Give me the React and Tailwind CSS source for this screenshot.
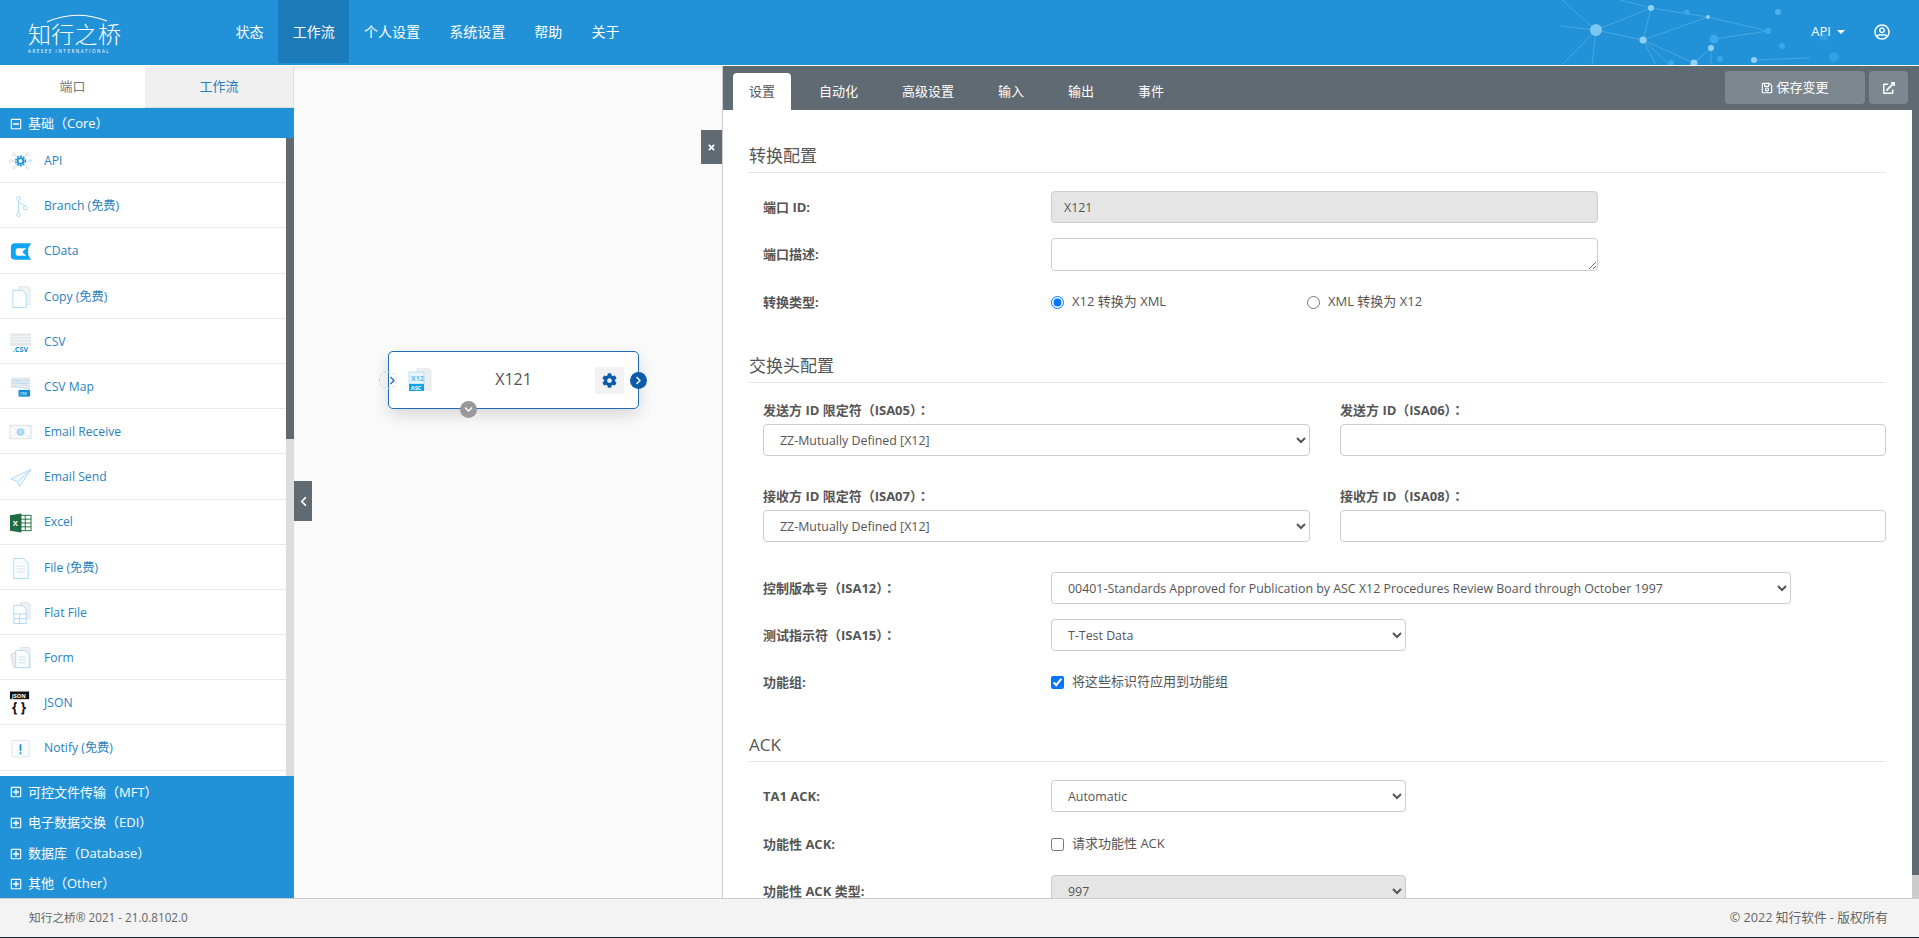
import {
  FaChevronDown,
  FaChevronLeft,
  FaChevronRight,
  FaCog,
  FaExternalLinkAlt,
  FaRegMinusSquare,
  FaRegPlusSquare,
  FaRegSave,
  FaRegUserCircle,
  FaTimes
} from 'react-icons/fa';

const NAV = ['状态', '工作流', '个人设置', '系统设置', '帮助', '关于'];
const TABS = ['设置', '自动化', '高级设置', '输入', '输出', '事件'];

const SKY = '#a9daf5';
const GREY = '#d5dbe2';

// header background network, coordinates are local to the svg (left edge at x=1560)
const NODES = [
  [36, 30, 6, '#7cc6f0'], [91, 8, 3, '#8fd0f4'], [148, 17, 2, '#8fd0f4'], [83, 40, 3.5, '#8fd0f4'],
  [154, 39, 4.5, '#3aa8ea'], [208, 31, 3, '#3aa8ea'], [151, 48, 3, '#8fd0f4'], [134, 63, 3.5, '#8fd0f4'],
  [194, 60, 3, '#8fd0f4'], [160, 59, 3, '#3aa8ea'], [111, 63, 3, '#3aa8ea'], [218, 12, 3, '#50b0ea'],
  [222, 46, 3, '#3aa8ea'], [274, 57, 5, '#319fe2'], [264, 37, 4, '#319fe2'], [127, 12, 2.5, '#3aa8ea']
];
const LINKS = [
  [36, 30, 91, 8], [36, 30, 83, 40], [91, 8, 148, 17], [91, 8, 83, 40], [83, 40, 148, 17], [83, 40, 134, 63],
  [148, 17, 208, 31], [154, 39, 208, 31], [134, 63, 151, 48], [151, 48, 151, 65], [194, 60, 250, 58],
  [36, 30, 0, 26], [36, 30, 2, 65], [36, 30, 32, 65], [36, 30, 2, 0], [91, 8, 60, 0], [83, 40, 96, 65], [83, 40, 110, 65]
];

function Network() {
  return (
    <svg className="absolute left-[1560px] top-0 h-[65px] w-[300px]" viewBox="0 0 300 65">
      {LINKS.map(([a, b, c, d], i) => (
        <line key={i} x1={a} y1={b} x2={c} y2={d} stroke="#7cc6f0" strokeWidth="0.7" opacity="0.6" />
      ))}
      {NODES.map(([x, y, r, fill], i) => <circle key={i} cx={x} cy={y} r={r} fill={fill} />)}
    </svg>
  );
}

const ICONS = {
  api: (
    <>
      <g fill="none" stroke={GREY} strokeWidth="0.8">
        <path d="M12 12 5 5M12 12l7-7M12 12l-7 7M12 12l7 7M12 12H3M12 12h18" stroke={SKY} />
        <circle cx="5" cy="5" r="1.5" /><circle cx="19" cy="5" r="1.5" /><circle cx="5" cy="19" r="1.5" />
        <circle cx="19" cy="19" r="1.5" /><circle cx="2" cy="12" r="1.5" /><circle cx="22" cy="12" r="1.5" />
      </g>
      <circle cx="12" cy="12" r="5" fill="none" stroke="#0f8ed8" strokeWidth="1.4" strokeDasharray="2 1.2" />
      <circle cx="12" cy="12" r="3" fill="#fff" stroke="#0f8ed8" strokeWidth="1.8" />
    </>
  ),
  branch: (
    <g fill="none" stroke={SKY} strokeWidth="1">
      <circle cx="10" cy="4" r="2" /><circle cx="10" cy="21" r="2" /><circle cx="17" cy="14" r="2" />
      <path d="M10 6v13M10 8l7 4" />
    </g>
  ),
  cdata: <path fill="#0ea5f5" fillRule="evenodd" d="M6 4h17l-3 5v7l3 5H6a4 4 0 0 1-4-4V8a4 4 0 0 1 4-4Zm3 5a2 2 0 0 0-2 2v4a2 2 0 0 0 2 2h9l-2-2-2-2 2-2 2-2Z" />,
  copy: (
    <g fill="none" strokeWidth="1">
      <path d="M10 1h10l2 2v17H10Z" fill="#f0f2f5" stroke="#e2e6ea" />
      <path d="M4 5h10l4 4v14H4Z" fill="#fff" stroke={SKY} />
    </g>
  ),
  csv: (
    <>
      <rect x="1" y="3" width="22" height="13" fill="#e4e6ea" />
      <path d="M1 6h22M1 9h22M1 12h22" stroke="#fff" strokeWidth="0.8" />
      <text x="4" y="22" fontSize="7.5" fontWeight="700" fill="#0f8ed8">.CSV</text>
    </>
  ),
  csvMap: (
    <>
      <rect x="2" y="2" width="20" height="11" fill="#e8eaee" />
      <path d="M2 5h20M2 8h20M2 11l20 3M4 4l16 7" stroke={SKY} strokeWidth="0.7" fill="none" />
      <rect x="10" y="15" width="12" height="7" fill="#0f8ed8" />
      <text x="11.5" y="20.6" fontSize="5" fill="#fff">csv</text>
    </>
  ),
  emailReceive: (
    <g fill="none">
      <rect x="1" y="5" width="22" height="14" fill="#fafbfc" stroke="#d8dde4" />
      <path d="m1 5 11 8 11-8M1 19l8-7M23 19l-8-7" stroke="#e0e4ea" strokeWidth="0.8" />
      <circle cx="12" cy="12" r="3.5" fill="#b6dff5" stroke="#7fc2ea" strokeWidth="0.8" />
    </g>
  ),
  emailSend: (
    <g fill="none" stroke={SKY} strokeWidth="1" strokeLinejoin="round">
      <path d="M23 4 2 14l7 3 2 5 12-18Z" fill="#f3fafe" />
      <path d="M23 4 9 17" />
    </g>
  ),
  excel: (
    <>
      <rect x="11" y="4" width="12" height="16" fill="#fff" stroke="#1f7145" />
      <path d="M11 8h12M11 12h12M11 16h12M17 4v16" stroke="#1f7145" strokeWidth="1" />
      <path d="M1 4 13 2v20L1 20Z" fill="#1f6b43" />
      <text x="3.8" y="15.5" fontSize="8" fontWeight="700" fill="#fff">X</text>
    </>
  ),
  file: (
    <g fill="none" stroke={SKY} strokeWidth="1">
      <path d="M5 2h10l5 5v16H5Z" fill="#f8fcff" />
      <path d="M8 10h9M8 13h9M8 16h9" stroke="#dfe3e8" />
    </g>
  ),
  flat: (
    <g fill="none" strokeWidth="1">
      <path d="M12 1h8l2 2v15H12Z" fill="#eef0f3" stroke="#e0e4e8" />
      <path d="M5 4h9l4 4v15H5Z" fill="#fff" stroke={SKY} />
      <path d="M5 13h13M5 18h13M11 13v10" stroke={SKY} />
    </g>
  ),
  form: (
    <g fill="none" strokeWidth="1">
      <path d="M12 1h9l1 1v20H12Z" fill="#eef0f3" stroke="#dfe3e8" />
      <path d="M2 8 8 6v15l-3 1Z" fill="#eef0f3" stroke="#cfd5db" />
      <path d="M7 4h10l4 4v14H7Z" fill="#fdfeff" stroke={SKY} />
      <path d="M10 11h8M10 14h8M10 17h8" stroke="#d5dae0" />
    </g>
  ),
  json: (
    <>
      <rect x="1" y="0" width="20" height="8" fill="#111" />
      <text x="3" y="6.5" fontSize="5.8" fontWeight="700" fill="#fff">JSON</text>
      <text x="3" y="21" fontSize="14" fontWeight="700" fill="#111">{'{ }'}</text>
    </>
  ),
  notify: (
    <>
      <path d="M4 3h16a1 1 0 0 1 1 1v15a1 1 0 0 1-1 1h-6l-2 2-2-2H4a1 1 0 0 1-1-1V4a1 1 0 0 1 1-1Z" fill="#fafcfe" stroke="#dde3ea" />
      <path d="M12 7v7M12 15.5v2" stroke="#1b8fdc" strokeWidth="1.8" />
    </>
  )
};

const PORTS = [
  ['api', 'API'], ['branch', 'Branch (免费)'], ['cdata', 'CData'], ['copy', 'Copy (免费)'], ['csv', 'CSV'],
  ['csvMap', 'CSV Map'], ['emailReceive', 'Email Receive'], ['emailSend', 'Email Send'], ['excel', 'Excel'],
  ['file', 'File (免费)'], ['flat', 'Flat File'], ['form', 'Form'], ['json', 'JSON'], ['notify', 'Notify (免费)']
];

function Category({ label }) {
  return (
    <div className="flex h-[30.6px] items-center gap-[6px] bg-[#2292d8] pl-[10px] pt-[3px] text-[13px] text-white">
      <FaRegPlusSquare size={12} />
      <span>{label}</span>
    </div>
  );
}

function SectionTitle({ children, className }) {
  return (
    <h4 className={`h-[29px] border-b border-[#e5e5e5] text-[17px] leading-[24px] text-[#555] ${className}`}>
      {children}
    </h4>
  );
}

// the centred colon of the reference only exists in the TC cut of the font
function Label({ children }) {
  const wide = children.endsWith('：');
  return (
    <span className="text-[13px] font-bold text-[#555]">
      {wide ? children.slice(0, -1) : children}
      {wide && <span className="font-['Noto_Sans_CJK_TC',sans-serif]">：</span>}
    </span>
  );
}

function Row({ label, children, className = 'mt-[15px]' }) {
  return (
    <div className={`flex h-[32px] items-center pl-[14px] ${className}`}>
      <div className="w-[288px] shrink-0 pb-[2px]"><Label>{label}</Label></div>
      {children}
    </div>
  );
}

function Select({ value, className, disabled }) {
  return (
    <select
      disabled={disabled}
      defaultValue={value}
      className={`h-[32px] rounded-[4px] border border-[#ccc] px-3 text-[12.4px] text-[#555] opacity-100 ${disabled ? 'bg-[#e5e5e5]' : 'bg-white'} ${className}`}
    >
      <option>{value}</option>
    </select>
  );
}

function Field({ label, children, className }) {
  return (
    <div className={className}>
      <div className="flex h-[20px] items-center"><Label>{label}</Label></div>
      <div className="mt-[4px]">{children}</div>
    </div>
  );
}

export default function App() {
  return (
    <div className="flex h-screen w-full flex-col overflow-hidden bg-white font-['Open_Sans','Noto_Sans_CJK_SC',sans-serif]">
      {/* Top bar */}
      <header className="relative flex h-[65px] shrink-0 bg-[#2292d8] text-white">
        <Network />
        <div className="relative flex h-[65px] w-[221px] shrink-0 flex-col items-start pl-[28px]">
          <svg className="absolute left-[46px] top-[13px] h-[10px] w-[62px]" viewBox="0 0 62 10">
            <path d="M1 9Q30-4 61 8" fill="none" stroke="#fff" strokeWidth="1.2" />
          </svg>
          <span className="mt-[21px] text-[23px] font-light leading-[26px] tracking-[0.3px]">知行之桥</span>
          <span className="mt-[1px] text-[4.5px] leading-[6px] tracking-[1.55px]">ARESEE INTERNATIONAL</span>
        </div>
        <nav className="relative flex h-[63px] text-[14px]">
          {NAV.map(n => (
            <div key={n} className={`flex items-center px-[14.6px] ${n === '工作流' ? 'bg-[#1c7cb9]' : ''}`}>{n}</div>
          ))}
        </nav>
        <div className="relative ml-auto flex h-[63px] items-center pr-[29px] text-[13px]">
          <span>API</span>
          <span className="ml-[6px] h-0 w-0 border-x-[4px] border-t-[4px] border-x-transparent border-t-white" />
          <FaRegUserCircle size={16} className="ml-[29px]" />
        </div>
      </header>

      <main className="flex min-h-0 flex-1 pt-px">
        {/* Port palette */}
        <aside className="flex w-[294px] shrink-0 flex-col">
          <div className="flex h-[42px] shrink-0 text-[13px]">
            <div className="flex w-[145px] items-center justify-center rounded-t-[4px] bg-white text-[#777]">端口</div>
            <div className="flex flex-1 items-center justify-center border-b border-r border-[#ddd] bg-[#f0f0f0] text-[#2b7bb9]">工作流</div>
          </div>
          <div className="flex h-[30px] shrink-0 items-center gap-[6px] bg-[#2292d8] pl-[10px] pt-[2px] text-[13px] text-white">
            <FaRegMinusSquare size={12} />
            <span>基础（Core）</span>
          </div>
          <div className="flex min-h-0 flex-1">
            <div className="min-w-0 flex-1 overflow-hidden">
              {PORTS.map(([icon, label]) => (
                <div key={label} className="flex h-[45.2px] items-center gap-[12px] border-b border-[#e9e9e9] pl-[9px] pt-[2px] text-[12.2px] text-[#2b82c0]">
                  <svg className="h-[24px] w-[23px] shrink-0" viewBox="0 0 24 24">{ICONS[icon]}</svg>
                  <span>{label}</span>
                </div>
              ))}
            </div>
            <div className="w-2 shrink-0 bg-[#ddd]">
              <div className="h-[301px] bg-[#5f6a72]" />
            </div>
          </div>
          <Category label="可控文件传输（MFT）" />
          <Category label="电子数据交换（EDI）" />
          <Category label="数据库（Database）" />
          <Category label="其他（Other）" />
        </aside>

        {/* Canvas */}
        <section className="relative w-[428px] shrink-0 bg-[#fafafa] shadow-[inset_0_5px_4px_-3px_rgba(0,0,0,0.08)]">
          <div className="absolute left-0 top-[415px] flex h-[40px] w-[18px] items-center justify-center bg-[#5f6a72] text-white">
            <FaChevronLeft size={11} />
          </div>
          <div className="absolute right-0 top-[64px] flex h-[34px] w-[21px] items-center justify-center bg-[#5f6a72] text-white">
            <FaTimes size={9} />
          </div>
          <div className="absolute left-[94px] top-[285px] flex h-[58px] w-[251px] items-center rounded-[5px] border border-[#1c6fb7] bg-white shadow-[0_6px_16px_rgba(0,0,0,0.14)]">
            <svg className="ml-[19px] h-[24px] w-[24px] shrink-0" viewBox="0 0 24 24">
              <path d="M9 0h11l3 3v19H9Z" fill="#eceef1" stroke="#dfe2e6" strokeWidth="0.7" />
              <rect x="1" y="4" width="15" height="12" fill="#e9f6fe" stroke="#9ad3f4" strokeWidth="0.7" />
              <text x="3" y="13" fontSize="7" fontWeight="700" fill="#5fb8ee">X12</text>
              <rect x="1" y="16" width="15" height="7" fill="#17a0ea" />
              <text x="2.8" y="22" fontSize="5.6" fontWeight="700" fill="#fff">ASC</text>
            </svg>
            <span className="flex-1 pb-[2px] text-center text-[16px] text-[#555]">X121</span>
            <div className="mr-[14px] flex h-[27px] w-[29px] items-center justify-center rounded-[3px] bg-[#f2f2f2] text-[#0d5ca8]">
              <FaCog size={15} />
            </div>
            <div className="absolute -left-[10px] top-[19px] h-[18px] w-[18px] rounded-full border border-dashed border-[#ccc] bg-transparent">
              <FaChevronRight size={9} className="absolute left-[8px] top-[3.5px] text-[#1c6fb7]" />
            </div>
            <div className="absolute -right-[9px] top-[20px] flex h-[17px] w-[17px] items-center justify-center rounded-full bg-[#0d5ca8] text-white">
              <FaChevronRight size={9} />
            </div>
            <div className="absolute bottom-[-10px] left-[71px] flex h-[17px] w-[17px] items-center justify-center rounded-full bg-[#999] text-white">
              <FaChevronDown size={9} />
            </div>
          </div>
        </section>

        {/* Port settings */}
        <section className="flex min-w-0 flex-1 flex-col border-l border-[#ccc]">
          <div className="flex h-[44px] shrink-0 items-end bg-[#5f6a72] pl-[10px] pr-[11px] text-[13px] text-white">
            <div className="flex h-[37px] gap-[12px]">
              {TABS.map((t, i) => (
                <div key={t} className={`flex items-center rounded-t-[4px] px-4 ${i === 0 ? 'bg-white text-[#555]' : ''}`}>{t}</div>
              ))}
            </div>
            <div className="mb-[6px] ml-auto flex gap-[4px]">
              <div className="flex h-[33px] w-[140px] items-center justify-center gap-[3px] rounded-[4px] bg-[#7c8790]">
                <FaRegSave size={12} />
                <span>保存变更</span>
              </div>
              <div className="flex h-[33px] w-[39px] items-center justify-center rounded-[4px] bg-[#7c8790]">
                <FaExternalLinkAlt size={12} />
              </div>
            </div>
          </div>
          <div className="flex min-h-0 flex-1">
            <div className="min-w-0 flex-1 overflow-hidden pl-[26px] pr-[26px]">
              <SectionTitle className="mt-[34px]">转换配置</SectionTitle>
              <Row label="端口 ID:" className="mt-[18px]">
                <input readOnly value="X121" className="h-[32px] w-[547px] rounded-[4px] border border-[#ccc] bg-[#e5e5e5] px-3 text-[12.4px] text-[#555]" />
              </Row>
              <div className="mt-[15px] flex h-[33px] items-center pl-[14px]">
                <div className="w-[288px] shrink-0 pb-[3px]"><Label>端口描述:</Label></div>
                <textarea readOnly className="h-[33px] w-[547px] rounded-[4px] border border-[#ccc] bg-white" />
              </div>
              <Row label="转换类型:">
                <label className="flex w-[256px] items-center gap-[8px] text-[13px] text-[#555]">
                  <input type="radio" readOnly checked className="m-0 h-[13px] w-[13px]" />
                  X12 转换为 XML
                </label>
                <label className="flex items-center gap-[8px] text-[13px] text-[#555]">
                  <input type="radio" readOnly checked={false} className="m-0 h-[13px] w-[13px]" />
                  XML 转换为 X12
                </label>
              </Row>

              <SectionTitle className="mt-[36px]">交换头配置</SectionTitle>
              <div className="mt-[17px] flex gap-[30px] pl-[14px]">
                <Field label="发送方 ID 限定符（ISA05）：" className="w-[547px]">
                  <Select value="ZZ-Mutually Defined [X12]" className="w-full" />
                </Field>
                <Field label="发送方 ID（ISA06）：" className="w-[546px]">
                  <input readOnly className="h-[32px] w-full rounded-[4px] border border-[#ccc] bg-white" />
                </Field>
              </div>
              <div className="mt-[30px] flex gap-[30px] pl-[14px]">
                <Field label="接收方 ID 限定符（ISA07）：" className="w-[547px]">
                  <Select value="ZZ-Mutually Defined [X12]" className="w-full" />
                </Field>
                <Field label="接收方 ID（ISA08）：" className="w-[546px]">
                  <input readOnly className="h-[32px] w-full rounded-[4px] border border-[#ccc] bg-white" />
                </Field>
              </div>
              <Row label="控制版本号（ISA12）：" className="mt-[30px]">
                <Select value="00401-Standards Approved for Publication by ASC X12 Procedures Review Board through October 1997" className="w-[740px]" />
              </Row>
              <Row label="测试指示符（ISA15）：">
                <Select value="T-Test Data" className="w-[355px]" />
              </Row>
              <Row label="功能组:">
                <label className="flex items-center gap-[8px] text-[13px] text-[#555]">
                  <input type="checkbox" readOnly checked className="m-0 h-[13px] w-[13px]" />
                  将这些标识符应用到功能组
                </label>
              </Row>

              <SectionTitle className="mt-[35px]">ACK</SectionTitle>
              <Row label="TA1 ACK:" className="mt-[18px]">
                <Select value="Automatic" className="w-[355px]" />
              </Row>
              <Row label="功能性 ACK:" className="mt-[16px]">
                <label className="flex items-center gap-[8px] text-[13px] text-[#555]">
                  <input type="checkbox" readOnly checked={false} className="m-0 h-[13px] w-[13px]" />
                  请求功能性 ACK
                </label>
              </Row>
              <Row label="功能性 ACK 类型:">
                <Select value="997" disabled className="w-[355px]" />
              </Row>
            </div>
            <div className="w-[7px] shrink-0 bg-[#ccc]">
              <div className="h-[765px] bg-[#5f6a72]" />
            </div>
          </div>
        </section>
      </main>

      {/* Footer */}
      <footer className="flex h-[40px] shrink-0 items-center justify-between border-y border-b-[#1f2933] border-t-[#ccc] bg-[#f3f3f3] pl-[29px] pr-[31px] text-[#666]">
        <span className="text-[11.7px]">知行之桥® 2021 - 21.0.8102.0</span>
        <span className="text-[12.7px]">© 2022 知行软件 - 版权所有</span>
      </footer>
    </div>
  );
}
